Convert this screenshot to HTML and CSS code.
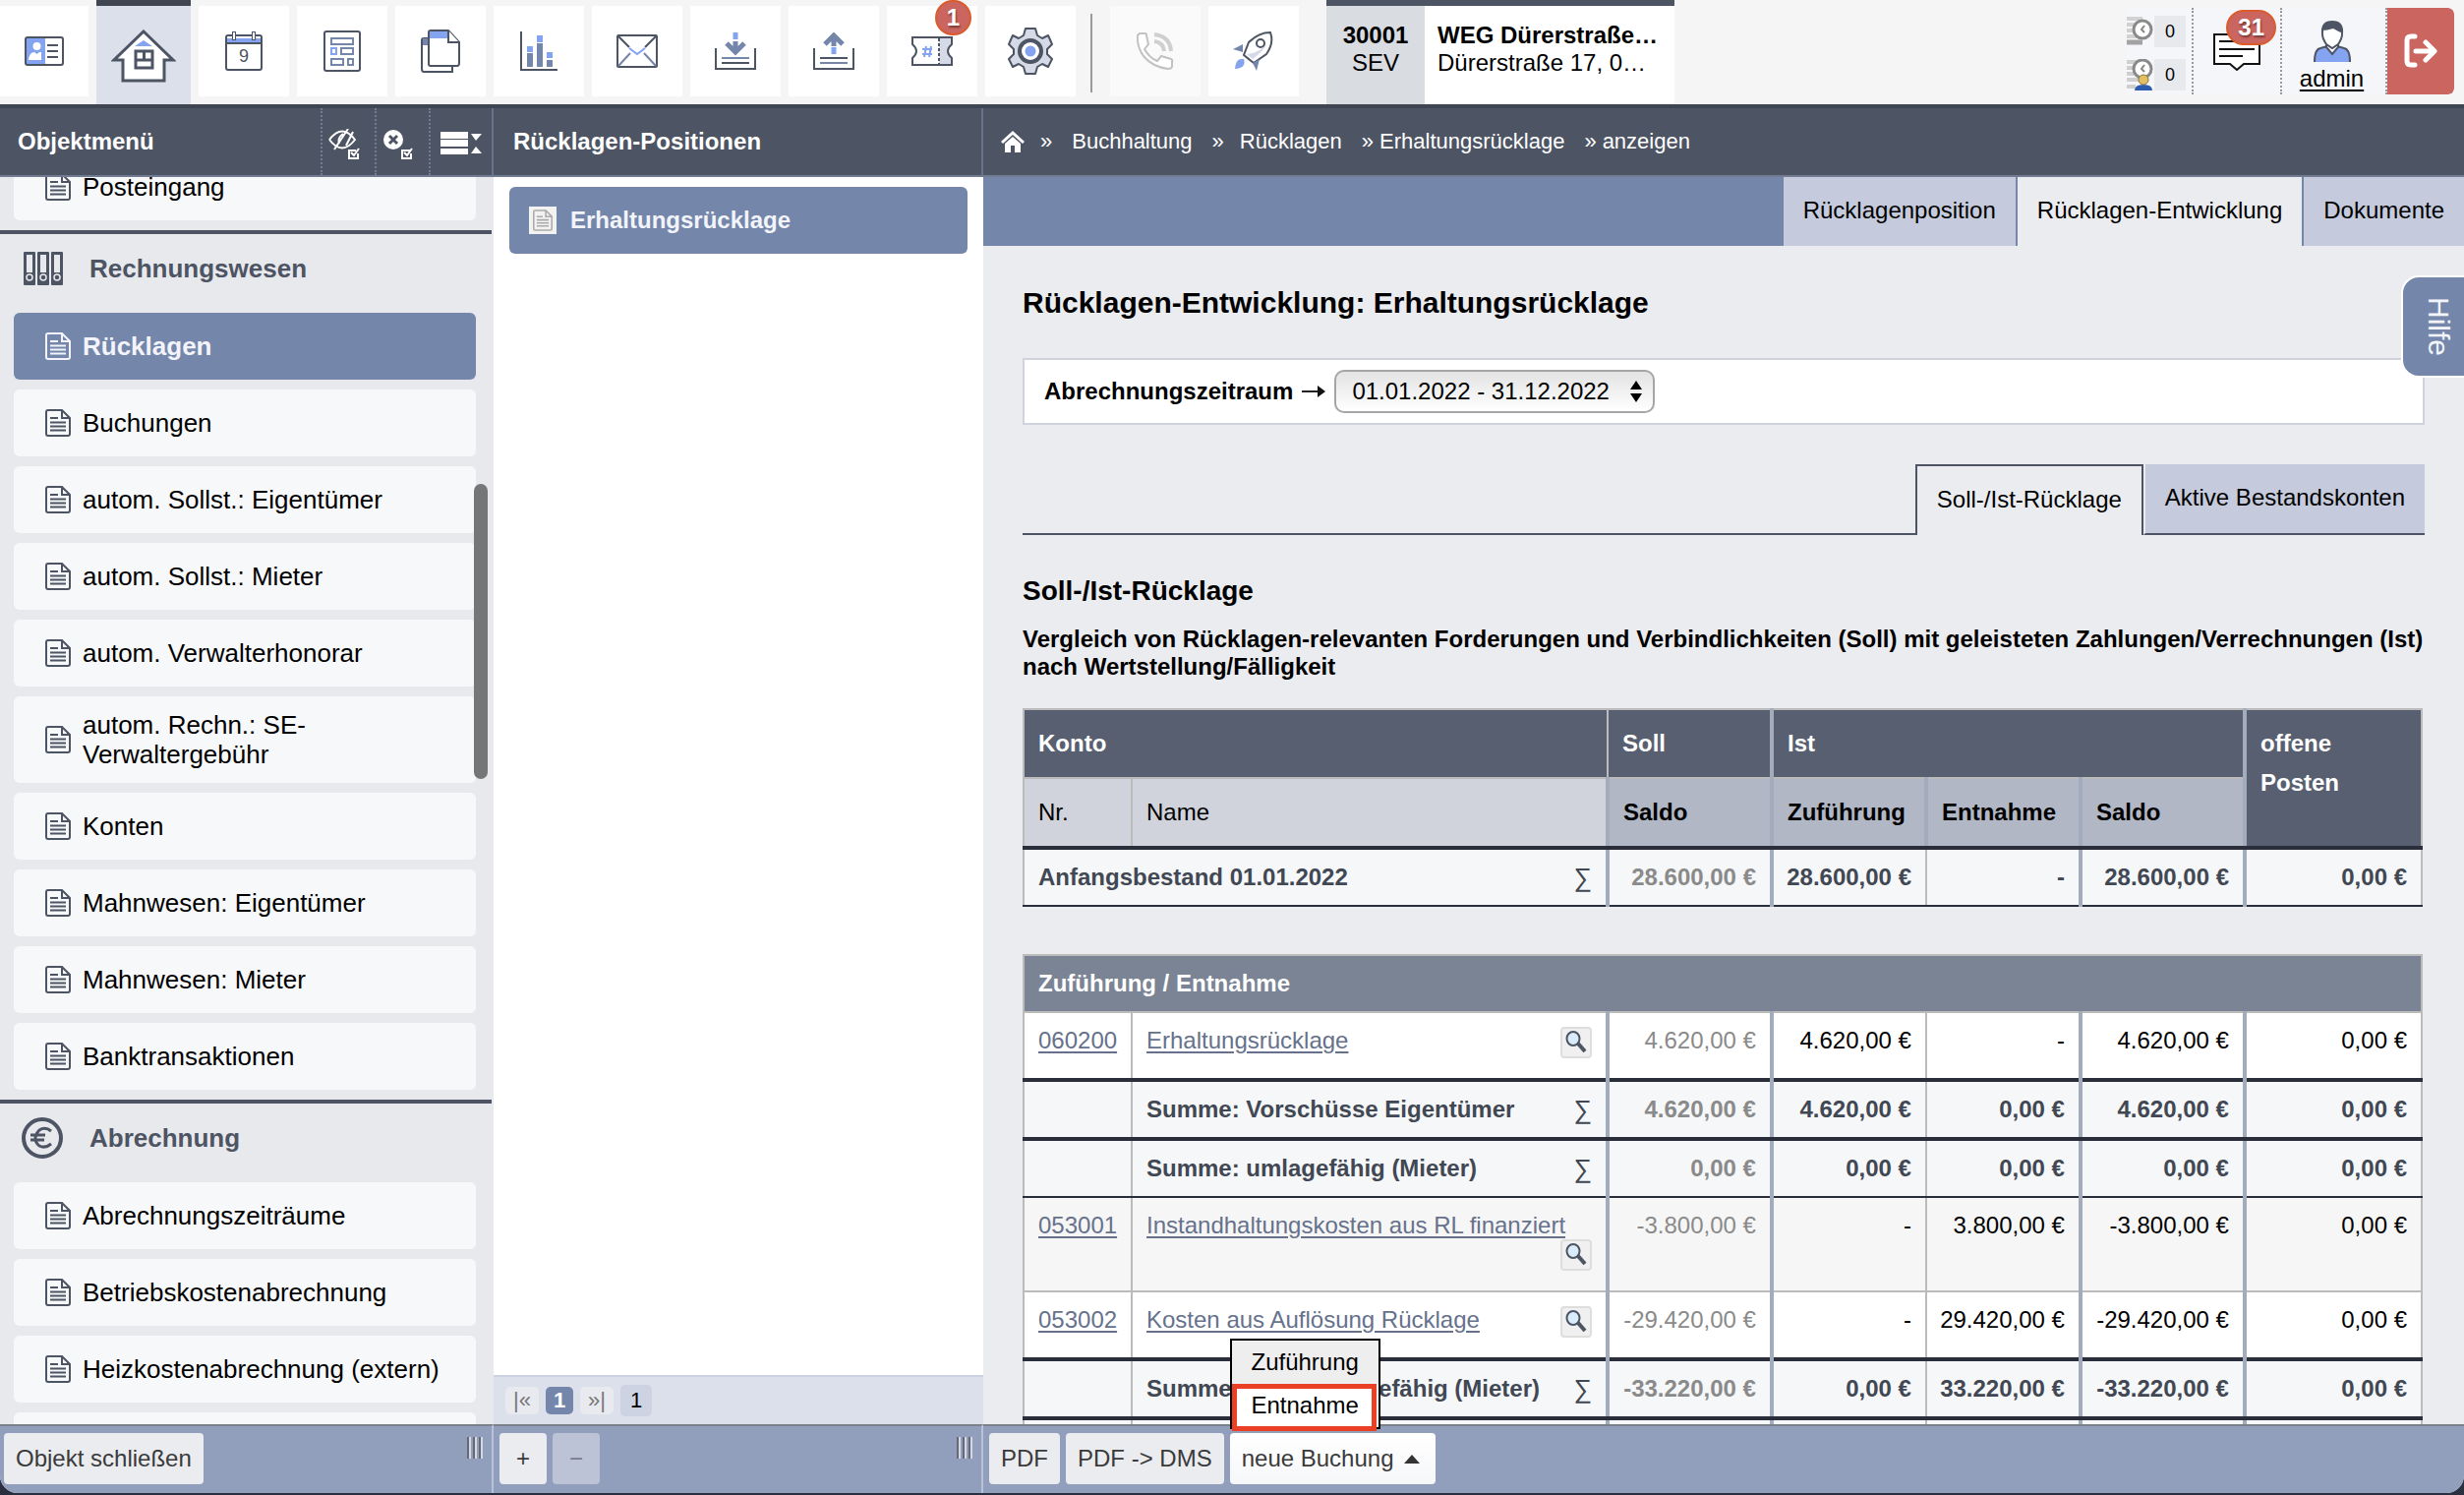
FILE: index.html
```html
<!DOCTYPE html>
<html lang="de">
<head>
<meta charset="utf-8">
<meta name="viewport" content="width=device-width, initial-scale=1">
<title>Rücklagen-Entwicklung</title>
<link rel="stylesheet" href="styles.css">
</head>
<body>
<svg class="sprite" aria-hidden="true">
  <symbol id="doc" viewBox="0 0 26 28"><path d="M1 3Q1 1 3 1H17L25 9V25Q25 27 23 27H3Q1 27 1 25ZM17 1V9H25" fill="none" stroke="currentColor" stroke-width="2"/><path d="M5 9H13M5 13.500H21M5 17.500H21M5 21.500H21" stroke="currentColor" stroke-width="2"/></symbol>
  <symbol id="lens" viewBox="0 0 22 24"><path d="M13 13L20 21" stroke="#4d5463" stroke-width="4"/><ellipse cx="8" cy="8" rx="6.500" ry="7" fill="#d9ecfb" stroke="#4d5463" stroke-width="2"/></symbol>
  <symbol id="grip" viewBox="0 0 18 22"><path d="M2 0V22M8 0V22M14 0V22" stroke="#666a74" stroke-width="2"/><path d="M4 0V22M10 0V22M16 0V22" stroke="#d3d8e4" stroke-width="2"/></symbol>
</svg>
<div class="app">
  <header class="topbar">
    <nav class="tools" aria-label="Hauptnavigation">
      <button class="tool tool-first" aria-label="Kontakte"><svg width="40" height="30" viewBox="0 0 40 30"><rect x="1" y="1" width="38" height="28" rx="2" fill="#fff"/><rect x="1" y="1" width="20" height="28" fill="#84a3f0"/><circle cx="12.500" cy="10" r="4" fill="#fff"/><path d="M4 24Q5 16 10 16L12.500 18L15 16H17V24Z" fill="#fff"/><path d="M23 9H34M23 15H34M23 21H34" stroke="#4d5463" stroke-width="2"/><rect x="1" y="1" width="38" height="28" rx="2" fill="none" stroke="#4d5463" stroke-width="2"/></svg></button>
      <button class="tool active" aria-label="Objekte"><svg width="66" height="54" viewBox="0 0 66 54"><path d="M33 2L63 31H54V52H12V31H3Z" fill="#fff" stroke="#4d5463" stroke-width="3"/><path d="M33 11L42 17H24Z" fill="#84a3f0"/><path d="M25 22H42V39H25ZM25 31H42M33.500 22V31" fill="none" stroke="#4d5463" stroke-width="3"/></svg></button>
      <button class="tool" aria-label="Kalender"><svg width="38" height="40" viewBox="0 0 38 40"><rect x="1" y="4" width="36" height="35" rx="2" fill="#fff" stroke="#4d5463" stroke-width="2"/><rect x="2" y="7" width="34" height="5" fill="#84a3f0"/><path d="M2 12H36" stroke="#4d5463" stroke-width="2"/><path d="M9 0V9M29 0V9" stroke="#4d5463" stroke-width="4"/><path d="M9 1V8M29 1V8" stroke="#fff" stroke-width="2"/><text x="19" y="31" text-anchor="middle" font-size="18" fill="#4d5463">9</text></svg></button>
      <button class="tool" aria-label="Formulare"><svg width="38" height="42" viewBox="0 0 38 42"><rect x="1" y="1" width="36" height="40" rx="2" fill="#fff" stroke="#4d5463" stroke-width="2"/><path d="M8 8H30V14H8ZM18 18H30V24H18ZM8 29H20V35H8ZM25 29H30V35H25Z" fill="none" stroke="#7486aa" stroke-width="2"/><path d="M8 18H13V24H8Z" fill="none" stroke="#84a3f0" stroke-width="2"/></svg></button>
      <button class="tool" aria-label="Dokumente"><svg width="40" height="44" viewBox="0 0 40 44"><path d="M7 9H3Q1 9 1 11V40Q1 43 3 43H32V37" fill="#fff" stroke="#4d5463" stroke-width="2"/><path d="M2 9H7V16H2Z" fill="#7486aa"/><path d="M8 3Q8 1 10 1H28L39 13V34Q39 37 37 37H10Q8 37 8 35Z" fill="#fff" stroke="#4d5463" stroke-width="2"/><path d="M9 2H27V9H9Z" fill="#84a3f0"/><path d="M28 1V13H39" fill="#fff" stroke="#4d5463" stroke-width="2"/></svg></button>
      <button class="tool" aria-label="Auswertungen"><svg width="38" height="40" viewBox="0 0 38 40"><path d="M1 0V39H38" fill="none" stroke="#4d5463" stroke-width="2"/><path d="M7 22H13V36H7ZM17 12H23V36H17ZM27 29H33V36H27Z" fill="#7486aa"/><path d="M7 15H13V21H7ZM17 4H23V11H17ZM27 21H33V27H27Z" fill="#84a3f0"/></svg></button>
      <button class="tool" aria-label="E-Mail"><svg width="42" height="34" viewBox="0 0 42 34"><rect x="1" y="1" width="40" height="32" rx="1" fill="#fff" stroke="#4d5463" stroke-width="2"/><path d="M2 2L13 13M40 2L29 13" stroke="#4d5463" stroke-width="2"/><path d="M13 14L21 20L29 14" fill="none" stroke="#84a3f0" stroke-width="2"/><path d="M2 32L14 19M40 32L28 19" stroke="#7486aa" stroke-width="2"/></svg></button>
      <button class="tool" aria-label="Posteingang"><svg width="42" height="38" viewBox="0 0 42 38"><path d="M1 16V37H41V16" fill="none" stroke="#4d5463" stroke-width="2"/><path d="M7 26H35" stroke="#7486aa" stroke-width="2"/><path d="M7 31H35" stroke="#4d5463" stroke-width="2"/><path d="M21 9V18M12 11L21 20L30 11" fill="none" stroke="#7486aa" stroke-width="5"/><path d="M21 0V7" stroke="#84a3f0" stroke-width="5"/></svg></button>
      <button class="tool" aria-label="Postausgang"><svg width="42" height="38" viewBox="0 0 42 38"><path d="M1 16V37H41V16" fill="none" stroke="#4d5463" stroke-width="2"/><path d="M7 26H35" stroke="#4d5463" stroke-width="2"/><path d="M7 31H35" stroke="#7486aa" stroke-width="2"/><path d="M21 4V14M12 12L21 3L30 12" fill="none" stroke="#7486aa" stroke-width="5"/><path d="M21 15V22" stroke="#84a3f0" stroke-width="5"/></svg></button>
      <button class="tool" aria-label="Tickets"><svg width="42" height="30" viewBox="0 0 42 30"><path d="M28 1H41V8Q33 15 41 22V29H28Z" fill="#d5dae6"/><path d="M1 1H41V8Q33 15 41 22V29H1V22Q9 15 1 8Z" fill="none" stroke="#4d5463" stroke-width="2"/><path d="M28 2V29" stroke="#4d5463" stroke-width="2" stroke-dasharray="3 2"/><path d="M15 10L13 21M20 10L18 21M11 13H21M11 18H21" stroke="#84a3f0" stroke-width="2"/></svg><span class="badge">1</span></button>
      <button class="tool" aria-label="Einstellungen"><svg width="46" height="48" viewBox="0 0 46 48"><path d="M18 1H28L30 8L35 11L41 8L45 17L40 22V27L45 32L41 40L35 37L30 40L28 47H18L16 40L11 37L5 40L1 32L6 27V22L1 17L5 8L11 11L16 8Z" fill="#d5dae6" stroke="#4d5463" stroke-width="2" stroke-linejoin="round"/><circle cx="23" cy="24" r="11" fill="#fff" stroke="#4d5463" stroke-width="4"/><circle cx="23" cy="24" r="5.500" fill="#84a3f0"/></svg></button>
      <span class="divider"></span>
      <button class="tool muted" aria-label="Telefon"><svg width="38" height="38" viewBox="0 0 38 38"><path d="M3 1H9Q10 1 10 3L12 12L8 17Q13 26 21 29L25 24L35 27Q37 28 36 30V35Q35 37 32 37Q16 35 7 24Q0 14 1 3Z" fill="#fff" stroke="#c2c2c2" stroke-width="2"/><path d="M18 9Q27 10 28 19M18 2Q34 4 35 19" fill="none" stroke="#cfcfcf" stroke-width="4"/></svg></button>
      <button class="tool" aria-label="Schnellstart"><svg width="42" height="40" viewBox="0 0 42 40"><path d="M38 1Q42 12 34 23L21 32L11 24L16 11Q26 1 38 1Z" fill="#fff" stroke="#4d5463" stroke-width="2"/><path d="M35 12Q31 20 20 28L14 23Q27 22 35 12Z" fill="#d5dae6"/><circle cx="28" cy="12" r="4" fill="#fff" stroke="#4d5463" stroke-width="2"/><path d="M10 13V21L0 18ZM20 32L27 28L24 40Z" fill="#7486aa"/><path d="M11 28Q14 37 2 38Q3 28 8 28Z" fill="#84a3f0"/></svg></button>
    </nav>
    <div class="object">
      <div class="object-id"><strong>30001</strong><span>SEV</span></div>
      <div class="object-name"><strong>WEG Dürerstraße…</strong><span>Dürerstraße 17, 0…</span></div>
    </div>
    <div class="account">
      <div class="counters">
        <div class="counter"><svg width="28" height="32" viewBox="0 0 28 32"><path d="M0 3H16M0 9H10M0 15H8M0 21H16" stroke="#d2d2d2" stroke-width="4"/><path d="M0 27H16" stroke="#a3a3a3" stroke-width="5"/><circle cx="16" cy="14" r="9" fill="#fff" stroke="#8a8a8a" stroke-width="3"/><path d="M18 10L15 14L18 17" fill="none" stroke="#888" stroke-width="2"/></svg><span>0</span></div>
        <div class="counter"><svg width="28" height="32" viewBox="0 0 28 32"><path d="M0 3H16M0 9H10M0 15H8M0 21H12M0 28H9" stroke="#cfcfcf" stroke-width="4"/><circle cx="16" cy="10" r="9" fill="#fff" stroke="#8a8a8a" stroke-width="3"/><path d="M18 6L15 10L18 13" fill="none" stroke="#888" stroke-width="2"/><path d="M8 32Q8 26 17 26Q26 26 26 32Z" fill="#2b5cae"/><circle cx="17" cy="21" r="5" fill="#e3bf62" stroke="#8a7340"/></svg><span>0</span></div>
      </div>
      <button class="account-cell chat" aria-label="Nachrichten"><svg width="48" height="38" viewBox="0 0 48 38"><path d="M1 1H47V31H31L24 37L17 31H1Z" fill="#fff" stroke="#111" stroke-width="2"/><path d="M6 8H42M6 16H42M6 23H30" stroke="#111" stroke-width="2"/></svg><span class="badge">31</span></button>
      <a class="account-cell user" href="#"><svg width="38" height="42" viewBox="0 0 38 42"><path d="M1 42Q1 29 7 28L14 26H24L31 28Q37 29 37 42" fill="#84a3f0" stroke="#4d5463" stroke-width="2"/><path d="M13 24V27L19 34L25 27V24" fill="#fff" stroke="#4d5463" stroke-width="2"/><path d="M9 14Q8 3 19 3Q30 3 29 14Q29 18 25 24L19 28L13 24Q9 18 9 14Z" fill="#fff" stroke="#4d5463" stroke-width="2"/><path d="M8 13Q7 0 19 0Q31 0 30 13Q25 11 20 8Q14 10 8 10Z" fill="#4d5463"/></svg><span>admin</span></a>
      <button class="logout" aria-label="Abmelden"><svg width="34" height="36" viewBox="0 0 34 36" fill="none" stroke="#fff" stroke-width="5" stroke-linecap="round" stroke-linejoin="round"><path d="M11 3H7Q3 3 3 7V28Q3 32 7 32H11M12 18H30M22 9L31 18L22 27"/></svg></button>
    </div>
  </header>

  <div class="columns">
    <section class="column sidebar">
      <div class="column-head">
        <h2>Objektmenü</h2>
        <div class="head-tools">
          <button aria-label="Ausblenden"><svg width="32" height="32" viewBox="0 0 32 32" fill="none" stroke="#fff" stroke-width="2"><path d="M1 11Q14 -6 27 11Q14 28 1 11M20 0L6 21M15 5Q9 9 11 15M18 17L25 3"/><path d="M28 22H21V30H30V25M23 24L26 27L31 20"/></svg></button>
          <button aria-label="Zurücksetzen"><svg width="32" height="32" viewBox="0 0 32 32"><circle cx="11" cy="11" r="10" fill="#fff"/><path d="M7 7L15 15M15 7L7 15" stroke="#4d5463" stroke-width="3"/><path d="M28 22H20V30H29V25M22 24L25 27L30 20" fill="none" stroke="#fff" stroke-width="2"/></svg></button>
          <button aria-label="Zuklappen"><svg width="42" height="24" viewBox="0 0 42 24" fill="#fff"><path d="M0 0H28V7H0ZM0 8H28V15H0ZM0 17H28V23H0ZM31 2H42L36 9ZM31 22H42L36 15Z"/></svg></button>
        </div>
      </div>
      <div class="column-body">
        <nav class="menu" aria-label="Objektmenü">
          <ul>
            <li><a href="#"><svg class="doc"><use href="#doc"/></svg>Posteingang</a></li>
          </ul>
          <h3><svg width="40" height="34" viewBox="0 0 40 34"><g fill="#4d5463"><rect x="0" y="0" width="12" height="34" rx="1"/><rect x="14" y="0" width="12" height="34" rx="1"/><rect x="28" y="0" width="12" height="34" rx="1"/></g><g fill="#e8e9ed"><rect x="3" y="3" width="6" height="18"/><rect x="17" y="3" width="6" height="18"/><rect x="31" y="3" width="6" height="18"/></g><g fill="none" stroke="#e8e9ed" stroke-width="1.500"><circle cx="6" cy="26" r="3"/><circle cx="20" cy="26" r="3"/><circle cx="34" cy="26" r="3"/></g></svg>Rechnungswesen</h3>
          <ul>
            <li><a class="selected" href="#"><svg class="doc"><use href="#doc"/></svg>Rücklagen</a></li>
            <li><a href="#"><svg class="doc"><use href="#doc"/></svg>Buchungen</a></li>
            <li><a href="#"><svg class="doc"><use href="#doc"/></svg>autom. Sollst.: Eigentümer</a></li>
            <li><a href="#"><svg class="doc"><use href="#doc"/></svg>autom. Sollst.: Mieter</a></li>
            <li><a href="#"><svg class="doc"><use href="#doc"/></svg>autom. Verwalterhonorar</a></li>
            <li><a href="#"><svg class="doc"><use href="#doc"/></svg><span>autom. Rechn.: SE-<br>Verwaltergebühr</span></a></li>
            <li><a href="#"><svg class="doc"><use href="#doc"/></svg>Konten</a></li>
            <li><a href="#"><svg class="doc"><use href="#doc"/></svg>Mahnwesen: Eigentümer</a></li>
            <li><a href="#"><svg class="doc"><use href="#doc"/></svg>Mahnwesen: Mieter</a></li>
            <li><a href="#"><svg class="doc"><use href="#doc"/></svg>Banktransaktionen</a></li>
          </ul>
          <h3><svg width="42" height="42" viewBox="0 0 42 42" fill="none" stroke="#4d5463"><circle cx="21" cy="21" r="19" stroke-width="4"/><path d="M30 14Q24 9 18 13Q14 17 14 21Q14 26 18 29Q24 32 30 27M9 18H24M9 23H23" stroke-width="3"/></svg>Abrechnung</h3>
          <ul>
            <li><a href="#"><svg class="doc"><use href="#doc"/></svg>Abrechnungszeiträume</a></li>
            <li><a href="#"><svg class="doc"><use href="#doc"/></svg>Betriebskostenabrechnung</a></li>
            <li><a href="#"><svg class="doc"><use href="#doc"/></svg>Heizkostenabrechnung (extern)</a></li>
            <li><a href="#"></a></li>
          </ul>
        </nav>
        <span class="scroll-thumb"></span>
      </div>
      <div class="column-foot">
        <button class="btn">Objekt schließen</button>
        <svg class="grip"><use href="#grip"/></svg>
      </div>
    </section>

    <section class="column positions">
      <div class="column-head"><h2>Rücklagen-Positionen</h2></div>
      <div class="column-body">
        <div class="position-list">
          <a class="position" href="#"><span class="position-icon"><svg width="20" height="22"><use href="#doc"/></svg></span>Erhaltungsrücklage</a>
        </div>
        <div class="pager">
          <button>|«</button><button class="current">1</button><button>»|</button><span>1</span>
        </div>
      </div>
      <div class="column-foot">
        <button class="btn square">+</button>
        <button class="btn square" disabled>−</button>
        <svg class="grip"><use href="#grip"/></svg>
      </div>
    </section>

    <main class="column detail">
      <div class="column-head">
        <nav class="crumbs" aria-label="Pfad">
          <a href="#" aria-label="Start"><svg width="24" height="22" viewBox="0 0 24 22" fill="#fff"><path d="M12 0L24 11L22 13L12 4L2 13L0 11Z"/><path d="M4 13L12 6L20 13V22H14V15H10V22H4Z"/></svg></a>
          <span class="first">»</span><a href="#">Buchhaltung</a>
          <span>»</span><a href="#">Rücklagen</a>
          <span class="tight">»</span><a href="#">Erhaltungsrücklage</a>
          <span class="tight">»</span><a href="#">anzeigen</a>
        </nav>
      </div>
      <div class="column-body">
        <nav class="tabs" aria-label="Ansichten">
          <a href="#">Rücklagenposition</a><a class="active" href="#">Rücklagen-Entwicklung</a><a href="#">Dokumente</a>
        </nav>
        <div class="content">
          <h1>Rücklagen-Entwicklung: Erhaltungsrücklage</h1>
          <form class="filter">
            <label for="period">Abrechnungszeitraum</label>
            <svg width="24" height="16" viewBox="0 0 24 16"><path d="M0 8H20" stroke="#222" stroke-width="2"/><path d="M16 2L24 8L16 14Z" fill="#111"/></svg>
            <span class="select"><select id="period"><option>01.01.2022 - 31.12.2022</option></select><svg width="12" height="22" viewBox="0 0 12 22"><path d="M0 9L6 0L12 9ZM0 13L6 22L12 13Z"/></svg></span>
          </form>
          <nav class="subtabs" aria-label="Auswertung">
            <a class="active" href="#">Soll-/Ist-Rücklage</a><a href="#">Aktive Bestandskonten</a>
          </nav>
          <h2>Soll-/Ist-Rücklage</h2>
          <p>Vergleich von Rücklagen-relevanten Forderungen und Verbindlichkeiten (Soll) mit geleisteten Zahlungen/Verrechnungen (Ist) nach Wertstellung/Fälligkeit</p>
          <table>
            <colgroup><col class="c-nr"><col><col class="c-wide"><col class="c-sum"><col class="c-sum"><col class="c-wide"><col class="c-open"></colgroup>
            <thead>
              <tr><th colspan="2">Konto</th><th>Soll</th><th class="group" colspan="3">Ist</th><th class="group" rowspan="2">offene Posten</th></tr>
              <tr class="sub"><th class="plain">Nr.</th><th class="plain">Name</th><th class="group">Saldo</th><th class="group">Zuführung</th><th class="group">Entnahme</th><th class="group">Saldo</th></tr>
            </thead>
            <tbody>
              <tr class="sum last"><td colspan="2"><span class="sigma">∑</span>Anfangsbestand 01.01.2022</td><td class="group soll">28.600,00 €</td><td class="group">28.600,00 €</td><td>-</td><td class="group">28.600,00 €</td><td class="group">0,00 €</td></tr>
            </tbody>
          </table>
          <table>
            <colgroup><col class="c-nr"><col><col class="c-wide"><col class="c-sum"><col class="c-sum"><col class="c-wide"><col class="c-open"></colgroup>
            <tbody>
              <tr class="section"><th colspan="7">Zuführung / Entnahme</th></tr>
              <tr><td><a href="#">060200</a></td><td><div class="name"><a href="#">Erhaltungsrücklage</a><button class="lens" aria-label="Details"><svg><use href="#lens"/></svg></button></div></td><td class="group soll">4.620,00 €</td><td class="group">4.620,00 €</td><td>-</td><td class="group">4.620,00 €</td><td class="group">0,00 €</td></tr>
              <tr class="sum"><td></td><td><span class="sigma">∑</span>Summe: Vorschüsse Eigentümer</td><td class="group soll">4.620,00 €</td><td class="group">4.620,00 €</td><td>0,00 €</td><td class="group">4.620,00 €</td><td class="group">0,00 €</td></tr>
              <tr class="sum last"><td></td><td><span class="sigma">∑</span>Summe: umlagefähig (Mieter)</td><td class="group soll">0,00 €</td><td class="group">0,00 €</td><td>0,00 €</td><td class="group">0,00 €</td><td class="group">0,00 €</td></tr>
              <tr class="odd"><td><a href="#">053001</a></td><td><div class="name"><a href="#">Instandhaltungskosten aus RL finanziert</a><button class="lens" aria-label="Details"><svg><use href="#lens"/></svg></button></div></td><td class="group soll">-3.800,00 €</td><td class="group">-</td><td>3.800,00 €</td><td class="group">-3.800,00 €</td><td class="group">0,00 €</td></tr>
              <tr><td><a href="#">053002</a></td><td><div class="name"><a href="#">Kosten aus Auflösung Rücklage</a><button class="lens" aria-label="Details"><svg><use href="#lens"/></svg></button></div></td><td class="group soll">-29.420,00 €</td><td class="group">-</td><td>29.420,00 €</td><td class="group">-29.420,00 €</td><td class="group">0,00 €</td></tr>
              <tr class="sum"><td></td><td><span class="sigma">∑</span>Summe: nicht umlagefähig (Mieter)</td><td class="group soll">-33.220,00 €</td><td class="group">0,00 €</td><td>33.220,00 €</td><td class="group">-33.220,00 €</td><td class="group">0,00 €</td></tr>
              <tr class="sum"><td></td><td></td><td class="group"></td><td class="group"></td><td></td><td class="group"></td><td class="group"></td></tr>
            </tbody>
          </table>
        </div>
        <button class="help">Hilfe</button>
      </div>
      <div class="column-foot">
        <button class="btn">PDF</button>
        <button class="btn">PDF -&gt; DMS</button>
        <div class="dropdown">
          <button class="btn open" aria-expanded="true">neue Buchung <svg width="16" height="9" viewBox="0 0 16 9"><path d="M0 9L8 0L16 9Z" fill="#333"/></svg></button>
          <div class="dropdown-menu"><button>Zuführung</button><button class="marked">Entnahme</button></div>
        </div>
      </div>
    </main>
  </div>
</div>
</body>
</html>
```
FILE: styles.css
```css
* { box-sizing: border-box; }

body {
  margin: 0;
  background: #2a3040;
  color: #000;
  font: 24px/28px "Liberation Sans", Arial, sans-serif;
}

h1, h2, h3, p, ul { margin: 0; padding: 0; }
ul { list-style: none; }
a { color: inherit; text-decoration: none; }
button, select { font: inherit; color: inherit; border: 0; padding: 0; background: none; cursor: pointer; }
svg { display: block; flex: none; }
.sprite { position: absolute; width: 0; height: 0; }

.app {
  display: flex;
  flex-direction: column;
  height: calc(100vh - 2px);
  overflow: hidden;
  border-radius: 0 0 18px 18px;
  background: #ebecf0;
}

/* Top bar */
.topbar {
  display: flex;
  flex: none;
  height: 110px;
  background: #f5f5f5;
  border-bottom: 4px solid #3f4652;
}
.tools { display: flex; gap: 8px; }
.tool {
  position: relative;
  display: grid;
  place-items: center;
  width: 92px;
  height: 92px;
  margin-top: 6px;
  background: #fff;
}
.tool-first { width: 90px; }
.tool.active { width: 96px; height: 106px; margin: 0; padding-top: 2px; border-top: 6px solid #3f4652; background: #dce0ea; }
.tool.muted { background: #fafafa; }
.tools .divider { width: 2px; height: 80px; margin: 14px 10px 0 7px; background: #9a9a9a; }
.badge {
  position: absolute;
  display: grid;
  place-items: center;
  height: 36px;
  min-width: 36px;
  padding: 0 10px;
  border: 2px solid #d95c2c;
  border-radius: 18px;
  background: #cb6560;
  color: #fff;
  font-weight: bold;
  text-shadow: 1px 2px 2px #7a3a38;
}
.tool .badge { top: -6px; right: 6px; }

.object { display: flex; margin-left: 28px; border-top: 6px solid #4d5463; }
.object div { display: flex; flex-direction: column; padding: 16px 13px 0; background: #fff; white-space: nowrap; }
.object .object-id { width: 100px; background: #d9dce1; text-align: center; }
.object .object-name { width: 254px; }

.account { display: flex; height: 88px; margin: 8px 10px 0 auto; background: #f5f6f9; }
.counters { display: grid; gap: 12px; align-content: start; padding: 8px 6px 0 0; }
.counter { display: flex; font-size: 18px; line-height: 32px; }
.counter span { width: 32px; background: #e8e9ed; text-align: center; }
.account-cell { position: relative; display: flex; flex-direction: column; align-items: center; border-left: 2px dotted #999; }
.chat { width: 90px; padding-top: 26px; }
.chat .badge { top: 2px; right: 4px; }
.user { width: 107px; padding: 13px 4px 0 0; text-decoration: underline; text-underline-offset: 3px; }
.user span { margin-top: 3px; }
.logout { display: grid; place-items: center; width: 70px; border-left: 2px dotted #999; border-radius: 0 6px 6px 0; background: #cb6560 padding-box; }

/* Columns */
.columns { display: grid; grid-template-columns: 502px 498px minmax(0, 1fr); flex: 1; min-height: 0; }
.column { display: flex; flex-direction: column; min-width: 0; min-height: 0; }
.column-head {
  display: flex;
  align-items: center;
  flex: none;
  height: 70px;
  padding-left: 20px;
  border-bottom: 2px solid #727c91;
  border-right: 2px solid #69728a;
  background: #4d5463;
  color: #fff;
}
.column-head h2 { font-size: 24px; }
.sidebar .column-head, .detail .column-head { padding-left: 18px; }
.column-body { position: relative; display: flex; flex-direction: column; flex: 1; min-height: 0; overflow: hidden; }
.column-foot {
  position: relative;
  display: flex;
  align-items: center;
  gap: 6px;
  flex: none;
  height: 70px;
  padding: 0 6px 2px;
  border-top: 2px solid #7b8089;
  border-right: 2px solid #b9c2d8;
  background: #919ebc;
}
.sidebar .column-foot { padding-left: 4px; }
.detail .column-head, .detail .column-foot { border-right: 0; }

.btn { height: 52px; padding: 0 12px; border-radius: 4px; background: #ebecf0; color: #3a3a3a; }
.btn.square { width: 48px; padding: 0; }
.btn:disabled { background: #bcc3d6; color: #777d8d; }
.btn.open { display: flex; align-items: center; gap: 10px; padding: 0 16px 0 12px; background: linear-gradient(#fff, #f6f7f9); }
.grip { width: 18px; height: 22px; margin: 0 2px 22px auto; }

/* Sidebar */
.sidebar .column-body { background: #e8e9ed; }
.head-tools { display: flex; align-self: stretch; margin-left: auto; }
.head-tools button { display: grid; place-items: center start; width: 55px; padding: 6px 0 0 6px; border-left: 2px dotted #727c91; }
.head-tools button:last-child { place-items: center; width: 64px; padding: 4px 0 0; }
.menu { margin-top: -24px; font-size: 26px; line-height: 30px; }
.menu ul { display: grid; gap: 10px; padding: 0 18px 10px 14px; }
.menu a { display: flex; align-items: center; gap: 12px; min-height: 68px; padding: 14px 32px; border-radius: 6px; background: #f7f8fa; }
.menu a.selected { background: #7486aa; color: #f2f4fa; font-weight: bold; }
.menu .doc { width: 26px; height: 28px; color: #4d5463; }
.menu .selected .doc { color: #f2f4fa; }
.menu h3 {
  display: grid;
  grid-template-columns: 42px 1fr;
  align-items: center;
  gap: 27px;
  height: 84px;
  margin-right: 2px;
  padding: 0 0 10px 22px;
  border-top: 4px solid #4d5463;
  color: #4d5463;
  font-size: 26px;
}
.menu h3 svg { justify-self: end; }
.scroll-thumb { position: absolute; top: 312px; right: 6px; width: 14px; height: 300px; border-radius: 7px; background: #757677; }

/* Positions */
.positions .column-body { background: #fff; }
.position-list { flex: 1; padding: 10px 16px; }
.position { display: flex; align-items: center; gap: 14px; height: 68px; padding: 0 20px; border-radius: 6px; background: #7486aa; color: #f2f4fa; font-weight: bold; }
.position-icon { display: grid; place-items: center; width: 28px; height: 28px; background: #f2f2f2; color: #aaa; }
.pager { display: flex; align-items: center; gap: 7px; height: 50px; padding: 0 12px; border-top: 2px solid #ced3e3; background: #dce0ea; font-size: 22px; }
.pager button { width: 34px; height: 28px; border-radius: 5px; background: #e8eaf0; color: #777; line-height: 28px; }
.pager .current { width: 28px; background: #7486aa; color: #fff; font-weight: bold; }
.pager span { width: 32px; border-radius: 5px; background: #ced3e3; line-height: 32px; text-align: center; }

/* Detail */
.crumbs { display: flex; align-items: center; font-size: 22px; }
.crumbs span { margin: 0 16px 0 20px; }
.crumbs .first { margin: 0 20px 0 16px; }
.crumbs .tight { margin: 0 6px 0 20px; }
.tabs { display: flex; justify-content: flex-end; flex: none; height: 70px; background: #7486aa; }
.tabs a { padding: 20px; background: #c5cbdc; }
.tabs a + a { border-left: 2px solid #7486aa; }
.tabs .active { background: #ebecf0; }

.content { padding: 40px 40px 0; }
h1 { font-size: 30px; line-height: 36px; }
.filter { display: flex; align-items: center; gap: 9px; height: 68px; margin-top: 38px; padding: 0 20px; border: 2px solid #d1d3dc; background: #fff; }
.filter label { font-weight: bold; }
.select { position: relative; }
.select select {
  appearance: none;
  width: 326px;
  height: 44px;
  padding: 0 16px;
  border: 2px solid #a5a5a5;
  border-radius: 10px;
  background: linear-gradient(#e3e3e3, #fff);
}
.select svg { position: absolute; top: 11px; right: 13px; pointer-events: none; }

.subtabs { display: flex; justify-content: flex-end; height: 72px; margin-top: 40px; }
.subtabs::before { content: ""; flex: 1; border-bottom: 2px solid #4d5463; }
.subtabs a { padding: 20px; border-bottom: 2px solid #4d5463; border-left: 2px solid #ebecf0; background: #c5cbdc; }
.subtabs .active { border: 2px solid #4d5463; border-bottom: 0; background: none; }

.content > h2 { margin-top: 42px; font-size: 28px; line-height: 30px; }
.content p { margin-top: 20px; font-weight: bold; }

table { width: calc(100% - 2px); margin-top: 28px; border-collapse: collapse; table-layout: fixed; }
table + table { margin-top: 48px; }
.c-nr { width: 110px; }
.c-wide { width: 167px; }
.c-sum { width: 157px; }
.c-open { width: 180px; }
th, td { padding: 14px; border: 2px solid #bbb; vertical-align: top; text-align: left; }
th { background: #575f70; color: #fff; line-height: 40px; }
td { background: #fff; }
.sub th { background: #b1b7c4; border-bottom: 4px solid #2a2e3a; color: #000; }
.sub .plain { background: #d0d3db; font-weight: normal; }
thead th[rowspan] { border-bottom: 4px solid #2a2e3a; }
.section th { background: #7a8495; line-height: 28px; }
td.group, th.group { border-left: 4px solid #a3acbd; }
td:nth-last-child(-n+5) { padding-left: 0; text-align: right; white-space: nowrap; }
td a { color: #66718c; text-decoration: underline; text-underline-offset: 3px; }
.soll { color: #8a8a8a; }
.odd td { background: #f6f6f6; }
.sum td { border-top: 4px solid #2a2e3a; border-bottom: 4px solid #2a2e3a; background: #f5f7f9; color: #414753; font-weight: bold; }
.sum.last td { border-bottom-width: 2px; }
.sum td.soll { color: #8a8a8a; }
.sigma { float: right; font-size: 26px; font-weight: normal; }
.name { display: flow-root; }
.lens { float: right; display: grid; place-items: center; width: 32px; height: 32px; margin-bottom: 6px; border: 2px solid #dedede; border-radius: 4px; background: #f0f0f0; }
.lens svg { width: 22px; height: 24px; }

.help {
  position: absolute;
  top: 100px;
  right: 0;
  width: 64px;
  height: 104px;
  padding-left: 10px;
  border: 2px solid #fff;
  border-right: 0;
  border-radius: 18px 0 0 18px;
  background: #7486aa;
  color: #f2f4fa;
  font-size: 30px;
  line-height: 36px;
  text-align: center;
  writing-mode: vertical-rl;
}

.dropdown { position: relative; }
.dropdown-menu { position: absolute; left: 0; bottom: calc(100% + 4px); width: 153px; border: 2px solid #000; background: #eee; }
.dropdown-menu button { position: relative; display: block; width: 100%; height: 44px; color: #000; }
.dropdown-menu .marked { background: #fff; }
.marked::after { content: ""; position: absolute; inset: 0 2px -4px 0; border: 5px solid #ea4025; }
```
